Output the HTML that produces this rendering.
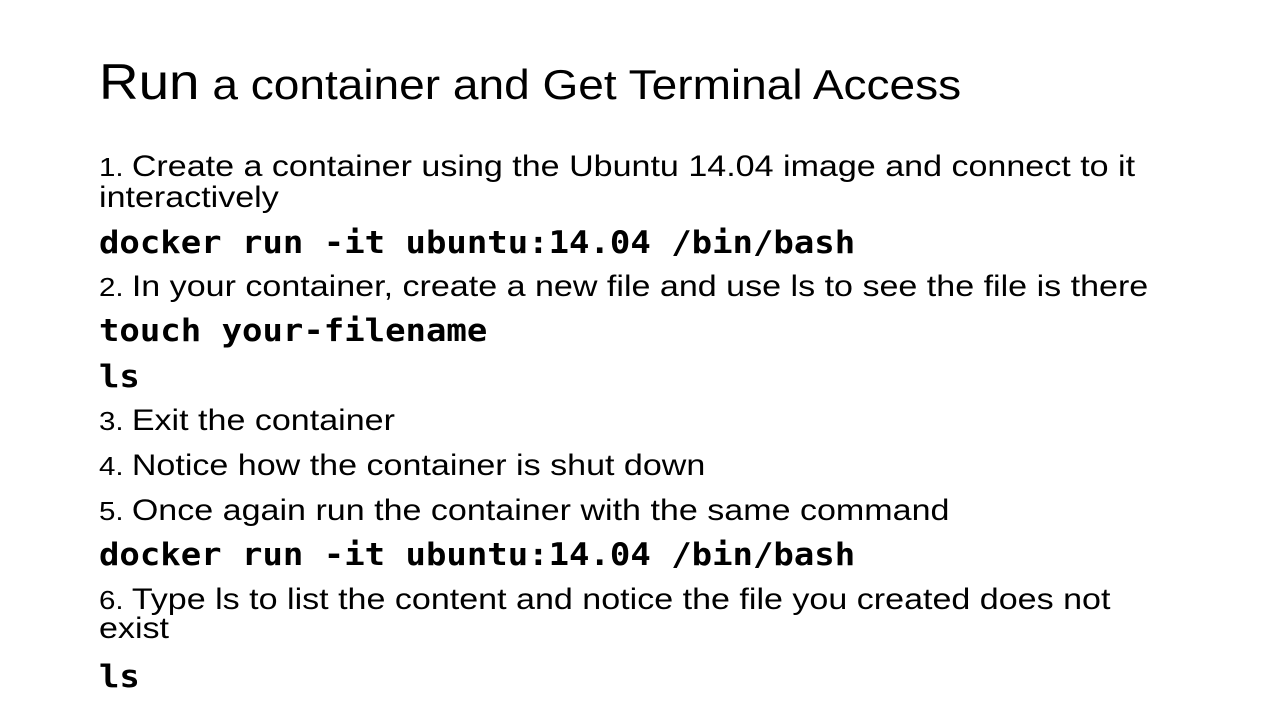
<!DOCTYPE html>
<html><head><meta charset="utf-8"><style>
body{margin:0;width:1280px;height:720px;background:#fff;overflow:hidden;position:relative;font-family:"Liberation Sans",sans-serif;color:#000}
.l{position:absolute;left:99px;white-space:nowrap;transform-origin:left center}
.t{font-size:30px;line-height:30px;transform:scaleX(1.135)}
.t small{font-size:26px}
.m{font-family:"DejaVu Sans Mono",monospace;font-weight:bold;font-size:31px;line-height:33px;transform:scaleX(1.095)}
.h{font-size:42px;line-height:50px;transform:scaleX(1.096);top:57px}
.h b{font-weight:normal;font-size:50px}
</style></head><body>
<div class="l h"><b>Run</b> a container and Get Terminal Access</div>
<div class="l t" style="top:152px"><small>1. </small>Create a container using the Ubuntu 14.04 image and connect to it</div>
<div class="l t" style="top:183px">interactively</div>
<div class="l m" style="top:227px">docker run -it ubuntu:14.04 /bin/bash</div>
<div class="l t" style="top:272px"><small>2. </small>In your container, create a new file and use ls to see the file is there</div>
<div class="l m" style="top:315px">touch your-filename</div>
<div class="l m" style="top:361px">ls</div>
<div class="l t" style="top:406px"><small>3. </small>Exit the container</div>
<div class="l t" style="top:451px"><small>4. </small>Notice how the container is shut down</div>
<div class="l t" style="top:496px"><small>5. </small>Once again run the container with the same command</div>
<div class="l m" style="top:539px">docker run -it ubuntu:14.04 /bin/bash</div>
<div class="l t" style="top:585px"><small>6. </small>Type ls to list the content and notice the file you created does not</div>
<div class="l t" style="top:614px">exist</div>
<div class="l m" style="top:661px">ls</div>
</body></html>
